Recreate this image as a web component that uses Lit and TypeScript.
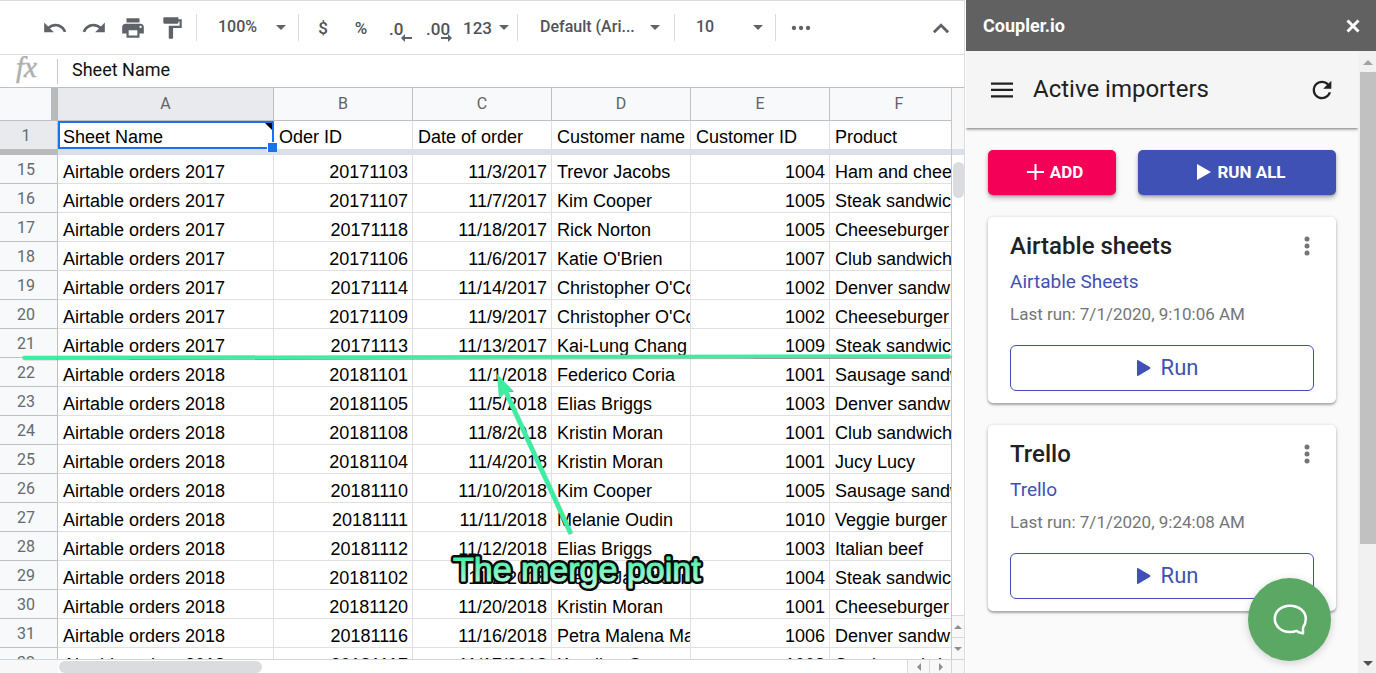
import { LitElement, html, svg, css } from "lit";
import { customElement } from "lit/decorators.js";

interface Order {
  row: number;
  sheet: string;
  id: string;
  date: string;
  customer: string;
  customerId: string;
  product: string;
}

const make = (row: number, year: number, id: string, date: string, customer: string, customerId: string, product: string): Order => ({
  row, sheet: `Airtable orders ${year}`, id, date, customer, customerId, product,
});

const ORDERS: Order[] = [
  make(15, 2017, "20171103", "11/3/2017", "Trevor Jacobs", "1004", "Ham and cheese"),
  make(16, 2017, "20171107", "11/7/2017", "Kim Cooper", "1005", "Steak sandwich"),
  make(17, 2017, "20171118", "11/18/2017", "Rick Norton", "1005", "Cheeseburger"),
  make(18, 2017, "20171106", "11/6/2017", "Katie O'Brien", "1007", "Club sandwich"),
  make(19, 2017, "20171114", "11/14/2017", "Christopher O'Connor", "1002", "Denver sandwich"),
  make(20, 2017, "20171109", "11/9/2017", "Christopher O'Connor", "1002", "Cheeseburger"),
  make(21, 2017, "20171113", "11/13/2017", "Kai-Lung Chang", "1009", "Steak sandwich"),
  make(22, 2018, "20181101", "11/1/2018", "Federico Coria", "1001", "Sausage sandwich"),
  make(23, 2018, "20181105", "11/5/2018", "Elias Briggs", "1003", "Denver sandwich"),
  make(24, 2018, "20181108", "11/8/2018", "Kristin Moran", "1001", "Club sandwich"),
  make(25, 2018, "20181104", "11/4/2018", "Kristin Moran", "1001", "Jucy Lucy"),
  make(26, 2018, "20181110", "11/10/2018", "Kim Cooper", "1005", "Sausage sandwich"),
  make(27, 2018, "20181111", "11/11/2018", "Melanie Oudin", "1010", "Veggie burger"),
  make(28, 2018, "20181112", "11/12/2018", "Elias Briggs", "1003", "Italian beef"),
  make(29, 2018, "20181102", "11/2/2018", "Trevor Jacobson", "1004", "Steak sandwich"),
  make(30, 2018, "20181120", "11/20/2018", "Kristin Moran", "1001", "Cheeseburger"),
  make(31, 2018, "20181116", "11/16/2018", "Petra Malena Martin", "1006", "Denver sandwich"),
  make(32, 2018, "20181117", "11/17/2018", "Karoline Green", "1008", "Steak sandwich"),
];

@customElement("sheet-toolbar")
class SheetToolbar extends LitElement {
  static styles = css`
    :host {
      display: flex;
      align-items: center;
      height: 55px;
      box-sizing: border-box;
      padding: 0 10px 0 42px;
      border-top: 1px solid #dadce0;
      border-bottom: 1px solid #dadce0;
      color: #5f6368;
      font: 500 17px/20px Roboto, sans-serif;
    }
    button, select {
      all: unset;
      box-sizing: border-box;
      cursor: pointer;
      color: #505357;
    }
    .icon { width: 26px; height: 26px; margin-right: 13px; flex: none; }
    .icon svg { display: block; width: 26px; height: 26px; fill: #5f6368; }
    .paint { margin-right: 11px; }
    .sep { width: 1px; height: 27px; background: #dadce0; flex: none; }
    .drop { position: relative; display: flex; align-items: center; flex: none; font-size: 16px; }
    .drop select { width: 100%; padding-bottom: 2px; }
    .caret {
      position: absolute;
      right: 0;
      border: 5px solid transparent;
      border-top-color: #5f6368;
      border-bottom: 0;
      pointer-events: none;
    }
    .zoom { width: 68px; margin: 0 12px 0 21px; }
    .font { width: 120px; margin: 0 14px 0 22px; }
    .size { width: 67px; margin: 0 12px 0 21px; }
    .fmt { width: 20px; text-align: center; margin-right: 18px; }
    .first { margin-left: 14px; }
    .dec { display: block; height: 28px; padding-top: 3px; position: relative; }
    .dec svg { position: absolute; right: 0; bottom: 0; width: 11px; height: 8px; fill: #5f6368; }
    .less { width: 23px; margin-right: 14px; }
    .more { width: 26px; margin-right: 11px; }
    .num { display: flex; align-items: center; width: 46px; position: relative; margin-right: 8px; }
    .dots { margin-left: 12px; }
    .collapse { margin: 0 0 0 auto; }
  `;
  render() {
    return html`
      <button class="icon" aria-label="Undo"><svg viewBox="0 0 24 24"><path d="M12.5 8c-2.65 0-5.05.99-6.9 2.6L2 7v9h9l-3.62-3.62c1.39-1.16 3.16-1.88 5.12-1.88 3.54 0 6.55 2.31 7.6 5.5l2.37-.78C21.08 11.03 17.15 8 12.5 8z"/></svg></button>
      <button class="icon" aria-label="Redo"><svg viewBox="0 0 24 24"><path d="M18.4 10.6C16.55 8.99 14.15 8 11.5 8c-4.65 0-8.58 3.03-9.96 7.22L3.9 16c1.05-3.19 4.05-5.5 7.6-5.5 1.95 0 3.73.72 5.12 1.88L13 16h9V7l-3.6 3.6z"/></svg></button>
      <button class="icon" aria-label="Print"><svg viewBox="0 0 24 24"><path d="M19 8H5c-1.66 0-3 1.34-3 3v6h4v4h12v-4h4v-6c0-1.66-1.34-3-3-3zm-3 11H8v-5h8v5zm3-7c-.55 0-1-.45-1-1s.45-1 1-1 1 .45 1 1-.45 1-1 1zm-1-9H6v4h12V3z"/></svg></button>
      <button class="icon paint" aria-label="Paint format"><svg viewBox="0 0 24 24"><path d="M18 4V3c0-.55-.45-1-1-1H5c-.55 0-1 .45-1 1v4c0 .55.45 1 1 1h12c.55 0 1-.45 1-1V6h1v4H9v11c0 .55.45 1 1 1h2c.55 0 1-.45 1-1v-9h8V4h-3z"/></svg></button>
      <span class="sep"></span>
      <label class="drop zoom"><select aria-label="Zoom"><option>100%</option></select><i class="caret"></i></label>
      <span class="sep"></span>
      <button class="fmt first" aria-label="Format as currency">$</button>
      <button class="fmt" aria-label="Format as percent">%</button>
      <button class="dec less" aria-label="Decrease decimal places">.0<svg viewBox="0 0 11 8"><path d="M0 4l4-4v3h7v2H4v3z"/></svg></button>
      <button class="dec more" aria-label="Increase decimal places">.00<svg viewBox="0 0 11 8"><path d="M11 4L7 0v3H0v2h7v3z"/></svg></button>
      <button class="num" aria-label="More formats">123<i class="caret"></i></button>
      <span class="sep"></span>
      <label class="drop font"><select aria-label="Font"><option>Default (Ari...</option></select><i class="caret"></i></label>
      <span class="sep"></span>
      <label class="drop size"><select aria-label="Font size"><option>10</option></select><i class="caret"></i></label>
      <span class="sep"></span>
      <button class="icon dots" aria-label="More"><svg viewBox="0 0 24 24"><circle cx="5.500" cy="12" r="2"/><circle cx="12" cy="12" r="2"/><circle cx="18.500" cy="12" r="2"/></svg></button>
      <button class="icon collapse" aria-label="Hide the menus"><svg viewBox="0 0 24 24"><path d="M12 7.500L4.500 15l1.900 1.900L12 11.300l5.600 5.600L19.500 15z"/></svg></button>
    `;
  }
}

@customElement("sheet-grid")
class SheetGrid extends LitElement {
  static styles = css`
    :host {
      display: grid;
      grid-template: minmax(0, 1fr) 14px / minmax(0, 1fr) 13px;
      min-height: 0;
      font: 18px/20px "Liberation Sans", Arial, sans-serif;
      color: #000;
    }
    .view { overflow: hidden; border-right: 1px solid #c7c7c7; }
    table { table-layout: fixed; width: 968px; border-spacing: 0; }
    .c-row { width: 58px; }
    .c-first { width: 216px; }
    .c-rest { width: 139px; }
    th, td { box-sizing: border-box; padding: 0; font-weight: 400; overflow: hidden; white-space: nowrap; }
    thead th {
      height: 33px;
      background: #f8f9fa;
      border-right: 1px solid #c0c0c0;
      border-bottom: 1px solid #c0c0c0;
      color: #5f6368;
      font: 16px/20px Roboto, sans-serif;
    }
    thead .corner { border-right: 7px solid #bababa; }
    tbody th {
      background: #f8f9fa;
      border-right: 1px solid #c0c0c0;
      border-bottom: 1px solid #c0c0c0;
      color: #666a6e;
      font: 16px/20px Roboto, sans-serif;
      padding: 2px 5px 0 0;
    }
    thead .active, tbody .frozen th { background: #e8eaed; }
    td { height: 29px; padding: 6px 4px 0 5px; border-right: 1px solid #e0e0e0; border-bottom: 1px solid #e0e0e0; vertical-align: top; line-height: 22px; }
    .right { text-align: right; }
    .frozen td { height: 28px; border-bottom: 0; line-height: 21px; }
    .frozen th { height: 28px; border-bottom: 0; }
    .frozen .selected { position: relative; padding: 4px 4px 0 3px; border: 2px solid #1a73e8; overflow: visible; line-height: 20px; }
    .note { position: absolute; top: 0; right: 0; border-top: 7px solid #000; border-left: 7px solid transparent; }
    .handle { position: absolute; right: -5px; bottom: -5px; width: 9px; height: 9px; background: #1a73e8; border: 1px solid #fff; border-width: 1px 0 0 1px; }
    .bar td { height: 6px; padding: 0; border: 0; background: #dadfe8; line-height: 0; }
    .bar .grip { background: #bababa; }
    .vert { border-right: 1px solid #dadce0; display: flex; flex-direction: column; }
    .vhead { height: 61px; background: #f8f8f8; }
    .vbar { height: 6px; background: #dadfe8; }
    .vtrack { flex: 1; padding: 7px 0 0 1px; }
    .vthumb { height: 36px; border-radius: 6px; background: #dadce0; }
    .step { display: grid; place-items: center; flex: none; box-sizing: border-box; background: #f8f8f8; border: 0 solid #d9d9d9; padding: 0; }
    .vert .step { height: 22px; border-top-width: 1px; }
    .step svg { width: 8px; height: 8px; fill: #8f8f8f; }
    .horiz { display: flex; border-top: 1px solid #d5d5d5; border-right: 1px solid #d5d5d5; }
    .hhead { width: 58px; background: #f8f8f8; }
    .htrack { flex: 1; padding: 1px 0 0 1px; }
    .hthumb { width: 203px; height: 12px; border-radius: 6px; background: #dadce0; }
    .horiz .step { width: 22px; border-left-width: 1px; }
    .end { background: #f8f8f8; border-top: 1px solid #d5d5d5; border-right: 1px solid #dadce0; }
  `;
  render() {
    return html`
      <div class="view">
        <table>
          <colgroup>
            <col class="c-row" /><col class="c-first" />
            ${[1, 2, 3, 4, 5].map(() => html`<col class="c-rest" />`)}
          </colgroup>
          <thead>
            <tr>
              <th class="corner"></th>
              <th class="active" scope="col">A</th>
              ${["B", "C", "D", "E", "F"].map((l) => html`<th scope="col">${l}</th>`)}
            </tr>
          </thead>
          <tbody>
            <tr class="frozen">
              <th scope="row">1</th>
              <td class="selected">Sheet Name<i class="note"></i><i class="handle"></i></td>
              ${["Oder ID", "Date of order", "Customer name", "Customer ID", "Product"].map((t) => html`<td>${t}</td>`)}
            </tr>
            <tr class="bar"><td class="grip"></td><td colspan="6"></td></tr>
            ${ORDERS.map((o) => html`
              <tr>
                <th scope="row">${o.row}</th>
                <td>${o.sheet}</td>
                <td class="right">${o.id}</td>
                <td class="right">${o.date}</td>
                <td>${o.customer}</td>
                <td class="right">${o.customerId}</td>
                <td>${o.product}</td>
              </tr>`)}
          </tbody>
        </table>
      </div>
      <div class="vert">
        <div class="vhead"></div><div class="vbar"></div>
        <div class="vtrack"><div class="vthumb"></div></div>
        <button class="step" aria-label="Scroll up"><svg viewBox="0 0 8 8"><path d="M0 6l4-4 4 4z"/></svg></button>
        <button class="step" aria-label="Scroll down"><svg viewBox="0 0 8 8"><path d="M0 2l4 4 4-4z"/></svg></button>
      </div>
      <div class="horiz">
        <div class="hhead"></div>
        <div class="htrack"><div class="hthumb"></div></div>
        <button class="step" aria-label="Scroll left"><svg viewBox="0 0 8 8"><path d="M6 0L2 4l4 4z"/></svg></button>
        <button class="step" aria-label="Scroll right"><svg viewBox="0 0 8 8"><path d="M2 0l4 4-4 4z"/></svg></button>
      </div>
      <div class="end"></div>
    `;
  }
}

@customElement("importer-card")
class ImporterCard extends LitElement {
  static properties = { name: {}, source: {}, ran: {} };
  declare name: string;
  declare source: string;
  declare ran: string;
  static styles = css`
    :host {
      display: flex;
      flex-direction: column;
      padding: 12px 22px;
      background: #fff;
      border-radius: 5px;
      box-shadow: 0 1px 4px rgba(0, 0, 0, .2), 0 2px 2px rgba(0, 0, 0, .22);
      font-family: Roboto, sans-serif;
    }
    .top { display: flex; justify-content: space-between; align-items: center; height: 34px; }
    h2 { margin: 0; font-size: 24px; line-height: 34px; font-weight: 500; color: #212121; }
    .menu { all: unset; width: 14px; height: 34px; cursor: pointer; }
    .menu svg { display: block; width: 14px; height: 34px; fill: #757575; }
    a { color: #3f51b5; text-decoration: none; font-size: 19px; line-height: 26px; margin-top: 6px; align-self: flex-start; }
    p { margin: 7px 0 19px; color: #757575; font-size: 17px; line-height: 24px; }
    .run {
      display: flex; align-items: center; justify-content: center; gap: 10px;
      height: 46px; padding: 0 0 0 10px; border: 1px solid #3f51b5; border-radius: 6px; background: #fff;
      color: #3f51b5; font: 22px/24px Roboto, sans-serif; cursor: pointer;
    }
    .run svg { width: 15px; height: 18px; fill: #3f51b5; }
  `;
  render() {
    return html`
      <div class="top">
        <h2>${this.name}</h2>
        <button class="menu" aria-label="Importer options"><svg viewBox="0 0 14 34"><circle cx="7" cy="10" r="2.500"/><circle cx="7" cy="17" r="2.500"/><circle cx="7" cy="24" r="2.500"/></svg></button>
      </div>
      <a href="#">${this.source}</a>
      <p>Last run: ${this.ran}</p>
      <button class="run"><svg viewBox="0 0 15 18"><path d="M1 2v14q0 1.500 1.300.700l11.500-6.700q1.200-1 0-2L2.300 1.300Q1 .500 1 2z"/></svg>Run</button>
    `;
  }
}

@customElement("coupler-panel")
class CouplerPanel extends LitElement {
  static styles = css`
    :host { display: flex; flex-direction: column; position: relative; font-family: Roboto, sans-serif; background: #fafafa; }
    .title { display: flex; align-items: center; justify-content: space-between; height: 51px; padding: 0 15px 0 17px; background: #616161; color: #fff; flex: none; }
    h1 { margin: 0; font-size: 18px; line-height: 24px; font-weight: 700; }
    .close, .plain { all: unset; cursor: pointer; display: block; }
    .close svg { display: block; width: 16px; height: 16px; stroke: #fff; stroke-width: 3; }
    .body { display: flex; flex: 1; min-height: 0; }
    .main { flex: 1; min-width: 0; overflow: hidden; }
    .appbar { display: flex; align-items: center; height: 77px; box-sizing: border-box; padding: 0 22px; background: #f5f5f5; box-shadow: 0 1px 3px rgba(0, 0, 0, .55); }
    .appbar h2 { margin: 0 auto 0 17px; padding-bottom: 2px; font-size: 24px; line-height: 32px; font-weight: 400; color: #212121; }
    .plain svg { display: block; width: 28px; height: 28px; fill: #212121; }
    .content { display: flex; flex-direction: column; gap: 22px; padding: 22px; }
    .actions { display: flex; gap: 22px; }
    .act {
      display: flex; align-items: center; justify-content: center; gap: 6px; height: 45px; padding: 0 0 1px 6px; border: 0; border-radius: 5px; color: #fff; cursor: pointer;
      font: 700 17px/24px Roboto, sans-serif; box-shadow: 0 3px 5px rgba(0, 0, 0, .28), 0 1px 2px rgba(0, 0, 0, .2);
    }
    .act svg { width: 17px; height: 18px; fill: #fff; }
    .add { width: 128px; background: #f50057; }
    .all { flex: 1; background: #3f51b5; }
    .scroll { width: 18px; box-sizing: border-box; background: #f1f1f1; display: flex; flex-direction: column; padding-left: 2px; }
    .scroll svg { display: block; width: 16px; height: 21px; flex: none; }
    .thumb { flex: 472; background: #c1c1c1; }
    .rest { flex: 108; }
    .chat {
      position: absolute; right: 45px; bottom: 12px; width: 83px; height: 83px; border: 0; padding: 0; border-radius: 50%;
      background: #5aa864; box-shadow: 0 2px 8px rgba(0, 0, 0, .18); display: grid; place-items: center; cursor: pointer;
    }
    .chat svg { width: 36px; height: 34px; fill: none; stroke: #fff; stroke-width: 2.500px; stroke-linejoin: round; }
  `;
  render() {
    return html`
      <header class="title">
        <h1>Coupler.io</h1>
        <button class="close" aria-label="Close"><svg viewBox="0 0 16 16"><path d="M2.500 2.500l11 11M13.500 2.500l-11 11"/></svg></button>
      </header>
      <div class="body">
        <div class="main">
          <div class="appbar">
            <button class="plain" aria-label="Menu"><svg viewBox="0 0 28 28"><path d="M3 6.500h22v2.300H3zM3 12.800h22v2.300H3zM3 19.200h22v2.300H3z"/></svg></button>
            <h2>Active importers</h2>
            <button class="plain" aria-label="Refresh"><svg viewBox="0 0 24 24"><path d="M17.650 6.350C16.200 4.900 14.210 4 12 4c-4.420 0-7.990 3.580-7.990 8s3.570 8 7.990 8c3.730 0 6.840-2.550 7.730-6h-2.080c-.820 2.330-3.040 4-5.650 4-3.310 0-6-2.690-6-6s2.690-6 6-6c1.660 0 3.140.69 4.220 1.780L13 11h7V4l-2.350 2.350z"/></svg></button>
          </div>
          <div class="content">
            <div class="actions">
              <button class="act add"><svg viewBox="0 0 17 18"><path d="M7.500 1h2v7H17v2H9.500v7h-2v-7H0V8h7.500z"/></svg>ADD</button>
              <button class="act all"><svg viewBox="0 0 17 18"><path d="M3 1l14 8-14 8z"/></svg>RUN ALL</button>
            </div>
            <importer-card .name=${"Airtable sheets"} .source=${"Airtable Sheets"} .ran=${"7/1/2020, 9:10:06 AM"}></importer-card>
            <importer-card .name=${"Trello"} .source=${"Trello"} .ran=${"7/1/2020, 9:24:08 AM"}></importer-card>
          </div>
        </div>
        <div class="scroll">
          <svg viewBox="0 0 16 21"><path d="M3 14h10L8 9z" fill="#a3a3a3"/></svg>
          <div class="thumb"></div><div class="rest"></div>
          <svg viewBox="0 0 16 21"><path d="M3 9h10l-5 5z" fill="#505050"/></svg>
        </div>
      </div>
      <button class="chat" aria-label="Open chat"><svg viewBox="0 0 36 34"><path d="M18 2.700C9 2.700 2.800 8.600 2.800 15.800S9 29 18 29c2.500 0 4.500-.4 6.500-1.200 1.200 1.400 3.500 2.200 6.500 2.600.2-2.600-.4-4.600.2-6.200C33 21.800 33.800 19 33.800 15.800 33.800 8.600 27 2.700 18 2.700z"/></svg></button>
    `;
  }
}

@customElement("app-root")
class AppRoot extends LitElement {
  static styles = css`
    :host { display: grid; grid-template-columns: minmax(0, 1fr) 410px; height: 100vh; overflow: hidden; background: #fff; }
    .sheet { position: relative; display: flex; flex-direction: column; min-width: 0; min-height: 0; margin-right: 1px; }
    .formula { display: flex; align-items: center; height: 33px; box-sizing: border-box; border-bottom: 1px solid #c0c0c0; border-right: 1px solid #dadce0; flex: none; }
    .fx { width: 57px; box-sizing: border-box; padding-left: 12px; flex: none; }
    .fx svg { display: block; width: 30px; height: 30px; }
    .fx text { font: italic 29px "Liberation Serif", serif; fill: #b0b0b0; stroke: #b0b0b0; stroke-width: .5px; }
    .formula input { flex: 1; min-width: 0; height: 25px; box-sizing: border-box; border: 0; border-left: 1px solid #c8c8c8; outline: 0; padding: 0 0 4px 14px; font: 18px/21px Roboto, sans-serif; color: #111; }
    sheet-toolbar { flex: none; border-right: 1px solid #dadce0; }
    sheet-grid { flex: 1; }
    .marks { position: absolute; left: 0; top: 0; width: 965px; height: 673px; pointer-events: none; }
    .caption { font: 34px "Liberation Sans", Arial, sans-serif; stroke-linejoin: round; }
    .outline { fill: #0a0a0a; stroke: #0a0a0a; stroke-width: 6px; }
    .face { fill: url(#mint); stroke: url(#mint); stroke-width: 1px; }
  `;
  render() {
    return html`
      <main class="sheet">
        <sheet-toolbar></sheet-toolbar>
        <div class="formula">
          <span class="fx"><svg viewBox="0 0 30 30" aria-hidden="true"><text x="4" y="21">fx</text></svg></span>
          <input aria-label="Formula" value="Sheet Name" />
        </div>
        <sheet-grid></sheet-grid>
        ${this.marks()}
      </main>
      <coupler-panel></coupler-panel>
    `;
  }
  marks() {
    return html`<svg class="marks" viewBox="0 0 965 673">${svg`
      <defs>
        <linearGradient id="mint" gradientUnits="userSpaceOnUse" x1="0" y1="556" x2="0" y2="588"><stop offset="0" stop-color="#3bf0a2"/><stop offset="1" stop-color="#c9f7e3"/></linearGradient>
        <filter id="soft" x="-10%" y="-10%" width="120%" height="120%"><feDropShadow dx="0.500" dy="1" stdDeviation=".6" flood-color="#000" flood-opacity=".4"/></filter>
      </defs>
      <g filter="url(#soft)" fill="#3eeea2" stroke="#3eeea2">
        <path d="M24 357.500L949 356" stroke-width="3.500" stroke-linecap="round" fill="none"/>
        <path d="M505 390L570.500 533" stroke-width="4.500" fill="none"/>
        <path d="M497 374l16.500 17-8 0-6.500 7z" stroke="none"/>
      </g>
      <text class="caption outline" x="453" y="581">The merge point</text>
      <text class="caption face" x="453" y="581" aria-hidden="true">The merge point</text>
    `}</svg>`;
  }
}
